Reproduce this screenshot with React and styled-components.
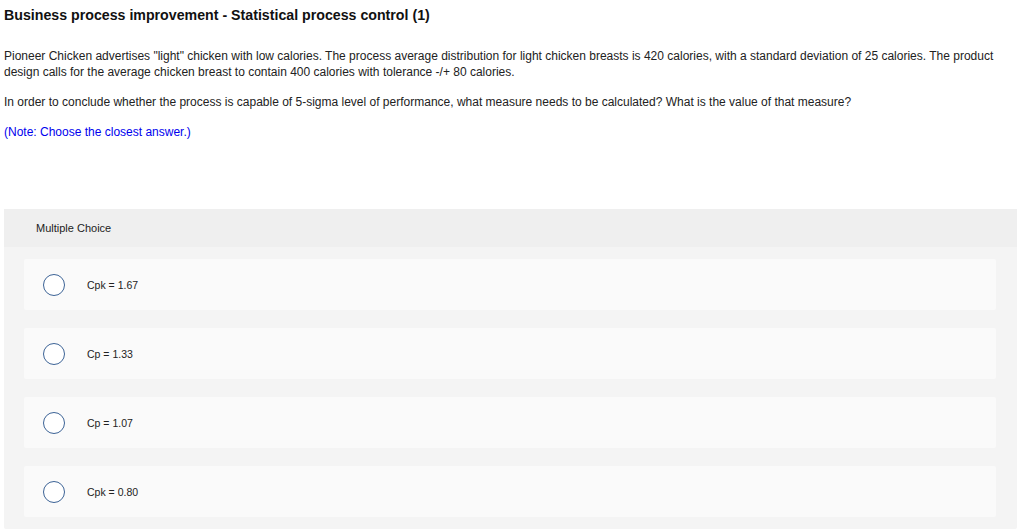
import styled, { createGlobalStyle } from "styled-components";

const Global = createGlobalStyle`
  body {
    margin: 0;
    background: #fff;
    font-family: "Liberation Sans", Arial, sans-serif;
    color: #222;
  }
`;

const Page = styled.div`
  padding: 5px 7px 0 4px;
`;

const Title = styled.h1`
  margin: 0;
  font-size: 14.2px;
  font-weight: 700;
  line-height: 20px;
  color: #111;
`;

const Question = styled.div`
  margin-top: 23px;
  font-size: 12px;
  line-height: 16px;
`;

const Para = styled.p`
  margin: 0 0 14px;
  color: ${(p) => p.color || "#222"};
`;

const Panel = styled.div`
  margin-top: 69px;
  background: #f4f4f4;
  border-radius: 2px;
  padding-bottom: 12px;
`;

const PanelHead = styled.div`
  height: 38px;
  display: flex;
  align-items: center;
  padding-left: 32px;
  background: #efefef;
  font-size: 11px;
  color: #222;
`;

const Options = styled.div`
  display: flex;
  flex-direction: column;
  gap: 18px;
  padding: 12px 21px 0 20px;
`;

const Option = styled.label`
  height: 51px;
  display: flex;
  align-items: center;
  background: #fafafa;
  border-radius: 2px;
  font-size: 10.5px;
  color: #222;
  cursor: pointer;
`;

const Radio = styled.span`
  width: 20px;
  height: 20px;
  border: 1.5px solid #3c6396;
  border-radius: 50%;
  margin-left: 19px;
  margin-right: 22px;
  background: #fff;
  flex: none;
`;

const choices = ["Cpk = 1.67", "Cp = 1.33", "Cp = 1.07", "Cpk = 0.80"];

export default function App() {
  return (
    <>
      <Global />
      <Page>
        <Title>Business process improvement - Statistical process control (1)</Title>
        <Question>
          <Para>
            Pioneer Chicken advertises "light" chicken with low calories. The process average
            distribution for light chicken breasts is 420 calories, with a standard deviation of 25
            calories. The product design calls for the average chicken breast to contain 400
            calories with tolerance -/+ 80 calories.
          </Para>
          <Para>
            In order to conclude whether the process is capable of 5-sigma level of performance,
            what measure needs to be calculated? What is the value of that measure?
          </Para>
          <Para color="#0000ee">(Note: Choose the closest answer.)</Para>
        </Question>
        <Panel>
          <PanelHead>Multiple Choice</PanelHead>
          <Options>
            {choices.map((c) => (
              <Option key={c}>
                <Radio />
                {c}
              </Option>
            ))}
          </Options>
        </Panel>
      </Page>
    </>
  );
}
